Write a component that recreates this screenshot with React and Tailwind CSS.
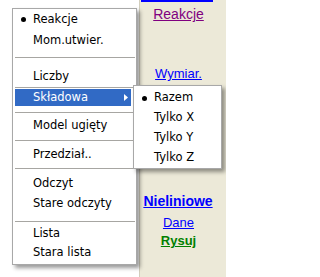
const Bullet = () => <span className="block w-[5px] h-[5px] rounded-full bg-black" />;

// one menu row: bullet column + label
const Row = ({ h, checked, children }) => (
  <div className={`${h} flex items-center`}>
    <div className="w-[20px] flex justify-center">{checked && <Bullet />}</div>
    <span className="whitespace-nowrap">{children}</span>
  </div>
);

const Sep = ({ cls }) => (
  <div className={`${cls} ml-[2px] mr-[1px]`}>
    <div className="h-px bg-[#a7a6a2]" />
  </div>
);

export default function App() {
  return (
    <div className="relative w-[226px] h-[277px] overflow-hidden flex bg-white">
      <div className="flex-1 bg-white" />

      {/* right link panel */}
      <div className="w-[87px] border-l border-[#d2cebd] bg-[#ece9d8] pr-[9px] flex flex-col items-center font-['Liberation_Sans',Arial,sans-serif]">
        <div className="h-[2px] w-[72px] mr-[3px] bg-[#0000ff]" />
        <a href="#" className="mt-[3px] text-[14px] leading-[18px] text-[#800080] underline">
          Reakcje
        </a>
        <a href="#" className="mt-[42px] text-[13px] leading-[18px] text-[#0000ff] underline">
          Wymiar.
        </a>
        <a href="#" className="mt-[109px] mr-[1px] text-[14px] leading-[18px] font-bold text-[#0000ff] underline">
          Nieliniowe
        </a>
        <a href="#" className="mt-[4px] text-[13px] leading-[18px] text-[#0000ff] underline">
          Dane
        </a>
        <a href="#" className="text-[13px] leading-[18px] font-bold text-[#008000] underline">
          Rysuj
        </a>
      </div>

      {/* popup menu */}
      <div className="absolute left-[12px] top-[8px] w-[125px] border border-[#a8a8a8] bg-white pb-[1px] text-[11.5px] text-black font-['DejaVu_Sans',sans-serif] shadow-[3px_3px_4px_rgba(0,0,0,0.4)]">
        <Row h="h-[21px]" checked>Reakcje</Row>
        <Row h="h-[21px]">Mom.utwier.</Row>
        <Sep cls="pt-[6px] pb-[8px]" />
        <Row h="h-[21px]">Liczby</Row>
        <Sep cls="pb-[1px]" />
        <div className="h-[17px] ml-[2px] mr-[5px] bg-[#316ac5] text-white flex items-center">
          <span className="pl-[18px]">Składowa</span>
          <svg className="ml-auto mr-[3px]" width="4" height="7" viewBox="0 0 4 7">
            <path d="M0 0L4 3.5L0 7Z" fill="#fff" />
          </svg>
        </div>
        <Sep cls="pt-[6px] pb-[3px]" />
        <Row h="h-[20px]">Model ugięty</Row>
        <Sep cls="pt-[4px] pb-[4px]" />
        <Row h="h-[20px]">Przedział..</Row>
        <Sep cls="pt-[3px] pb-[5px]" />
        <Row h="h-[20px]">Odczyt</Row>
        <Row h="h-[20px]">Stare odczyty</Row>
        <Sep cls="pt-[7px] pb-[2px]" />
        <Row h="h-[19px]">Lista</Row>
        <Row h="h-[20px]">Stara lista</Row>
      </div>

      {/* submenu */}
      <div className="absolute left-[133px] top-[85px] w-[89px] border border-[#a8a8a8] bg-white pt-[2px] text-[11.5px] text-black font-['DejaVu_Sans',sans-serif] shadow-[3px_3px_4px_rgba(0,0,0,0.4)]">
        <Row h="h-[20px]" checked>Razem</Row>
        <Row h="h-[20px]">Tylko X</Row>
        <Row h="h-[20px]">Tylko Y</Row>
        <Row h="h-[20px]">Tylko Z</Row>
      </div>
    </div>
  );
}
